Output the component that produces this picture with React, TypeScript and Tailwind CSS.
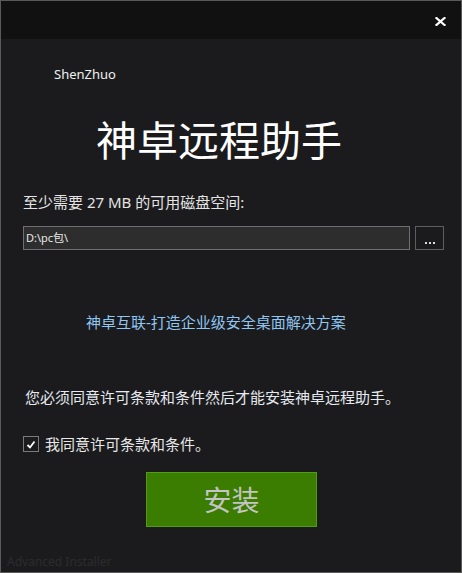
import React from "react";

const cjk = '"Noto Sans", "Noto Sans CJK SC", sans-serif';

export default function App() {
  return (
    <div
      className="w-[462px] h-[573px] border border-[#5a5a5a] bg-[#1b1b1d] flex flex-col overflow-hidden"
      style={{ fontFamily: cjk }}
    >
      <div className="h-[38px] shrink-0 bg-[#111111] flex items-center justify-end pr-[15px]">
        <svg width="11" height="9" viewBox="0 0 11 9" className="mt-[2px]">
          <path d="M1.5 1 L9.5 8 M9.5 1 L1.5 8" stroke="#ffffff" strokeWidth="2.2" strokeLinecap="square" />
        </svg>
      </div>

      <div className="flex flex-col flex-1">
        <div className="mt-[26px] pl-[53px] h-[18px] leading-[18px] text-[13px] text-[#f0f0f0]">
          ShenZhuo
        </div>

        <div className="mt-[33px] pl-[95px] h-[49px] leading-[49px] text-[41px] text-white">
          神卓远程助手
        </div>

        <div className="mt-[27px] pl-[22px] h-[20px] leading-[20px] text-[15px] text-[#e4e4e4]">
          至少需要 27 MB 的可用磁盘空间:
        </div>

        <div className="mt-[14px] pl-[22px] flex gap-[5px] h-[24px]">
          <div className="w-[387px] h-[24px] border border-[#6e6e6e] bg-[#2d2d2d] flex items-center pl-[2px] text-[11px] text-[#e8e8e8]">
            D:\pc包\
          </div>
          <div className="w-[29px] h-[24px] border border-[#5e5e5e] bg-[#1b1b1d] flex items-end justify-center pb-[5px]">
            <div className="flex gap-[2px]">
              <span className="w-[2px] h-[2px] bg-[#dcdcdc]" />
              <span className="w-[2px] h-[2px] bg-[#dcdcdc]" />
              <span className="w-[2px] h-[2px] bg-[#dcdcdc]" />
            </div>
          </div>
        </div>

        <div className="mt-[62px] pl-[85px] h-[20px] leading-[20px] text-[15px] text-[#8fc6f2]">
          神卓互联-打造企业级安全桌面解决方案
        </div>

        <div className="mt-[55px] pl-[24px] h-[20px] leading-[20px] text-[15px] text-[#e6eaf0]">
          您必须同意许可条款和条件然后才能安装神卓远程助手。
        </div>

        <div className="mt-[27px] pl-[22px] h-[20px] flex items-center gap-[6px]">
          <div className="w-[16px] h-[16px] border border-[#7a7a7a] flex items-center justify-center">
            <svg width="10" height="9" viewBox="0 0 10 9">
              <path d="M1.5 5 L4 7.5 L8.5 1.5" stroke="#ffffff" strokeWidth="1.8" fill="none" />
            </svg>
          </div>
          <span className="leading-[20px] text-[15px] text-[#e8e8e8]">我同意许可条款和条件。</span>
        </div>

        <div className="mt-[18px] pl-[145px]">
          <div className="w-[171px] h-[55px] bg-[#3a7d00] border border-[#4f9d12] flex items-center justify-center text-[28px] text-[#c4c4c4]">
            安装
          </div>
        </div>

        <div className="mt-auto pl-[6px] h-[16px] leading-[16px] text-[12px] text-[#2b2b2e] mb-[2px]">
          Advanced Installer
        </div>
      </div>
    </div>
  );
}
